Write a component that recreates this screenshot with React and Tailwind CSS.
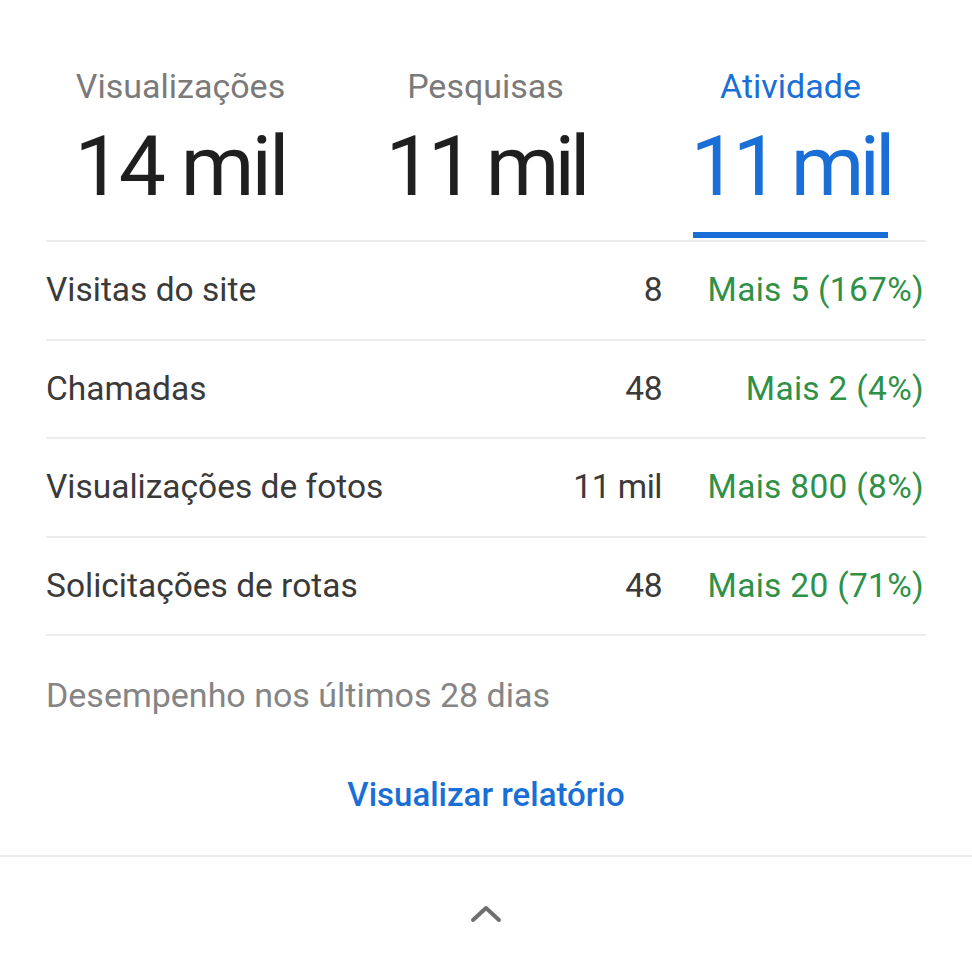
import React from 'react';

const tabs = [
    { label: 'Visualizações', value: '14 mil', active: false, track: 'tracking-[-3px]' },
    { label: 'Pesquisas', value: '11 mil', active: false, track: 'tracking-[-5px]' },
    { label: 'Atividade', value: '11 mil', active: true, track: 'tracking-[-5px]' },
];

const rows = [
    { name: 'Visitas do site', value: '8', change: 'Mais 5 (167%)' },
    { name: 'Chamadas', value: '48', change: 'Mais 2 (4%)' },
    { name: 'Visualizações de fotos', value: '11 mil', change: 'Mais 800 (8%)' },
    { name: 'Solicitações de rotas', value: '48', change: 'Mais 20 (71%)' },
];

const App = () => {
    return (
        <div className="w-[972px] h-[972px] bg-white overflow-hidden font-['Roboto',sans-serif]">
            {/* abas */}
            <div className="flex pl-[28px] pt-[66px]">
                {tabs.map((tab) => (
                    <div key={tab.label} className="w-[305px] flex flex-col items-center">
                        <div
                            className={
                                'text-[34px] leading-[40px] ' +
                                (tab.active ? 'text-[#1a6fd6]' : 'text-[#7a7a7a]')
                            }
                        >
                            {tab.label}
                        </div>
                        <div className="mt-[16px] flex flex-col items-center">
                            <div
                                className={
                                    'text-[84px] leading-[90px] ' +
                                    tab.track +
                                    ' ' +
                                    (tab.active ? 'text-[#1a6fd6]' : 'text-[#1f1f1f]')
                                }
                            >
                                {tab.value}
                            </div>
                            <div
                                className={
                                    'mt-[20px] h-[6px] w-[195px] ' +
                                    (tab.active ? 'bg-[#1a6fd6]' : 'bg-transparent')
                                }
                            />
                        </div>
                    </div>
                ))}
            </div>

            <div className="mx-[46px] mt-[2px] border-t-2 border-[#ececec]">
                {rows.map((row) => (
                    <div
                        key={row.name}
                        className="flex items-center h-[98.5px] border-b-2 border-[#ececec] text-[33.5px]"
                    >
                        <div className="flex-1 text-[#3a3a3a]">{row.name}</div>
                        <div className="text-[#3a3a3a] text-right pr-[2px] tracking-[-0.5px]">{row.value}</div>
                        <div className="w-[262px] text-right text-[#2e9147] pr-[2px] tracking-[0.3px]">{row.change}</div>
                    </div>
                ))}

                <div className="pt-[39px] text-[34px] leading-[40px] text-[#858585]">
                    Desempenho nos últimos 28 dias
                </div>

                <div className="pt-[60px] text-center text-[33px] leading-[40px] text-[#1a6fd6] font-medium">
                    Visualizar relatório
                </div>
            </div>

            <div className="mt-[40px] border-t-2 border-[#ececec] flex justify-center pt-[45px]">
                <svg width="34" height="22" viewBox="0 0 34 22" fill="none">
                    <path
                        d="M4 18 L17 6 L30 18"
                        stroke="#6f6f6f"
                        strokeWidth="4"
                        strokeLinecap="round"
                        strokeLinejoin="round"
                    />
                </svg>
            </div>
        </div>
    );
};

export default App;
